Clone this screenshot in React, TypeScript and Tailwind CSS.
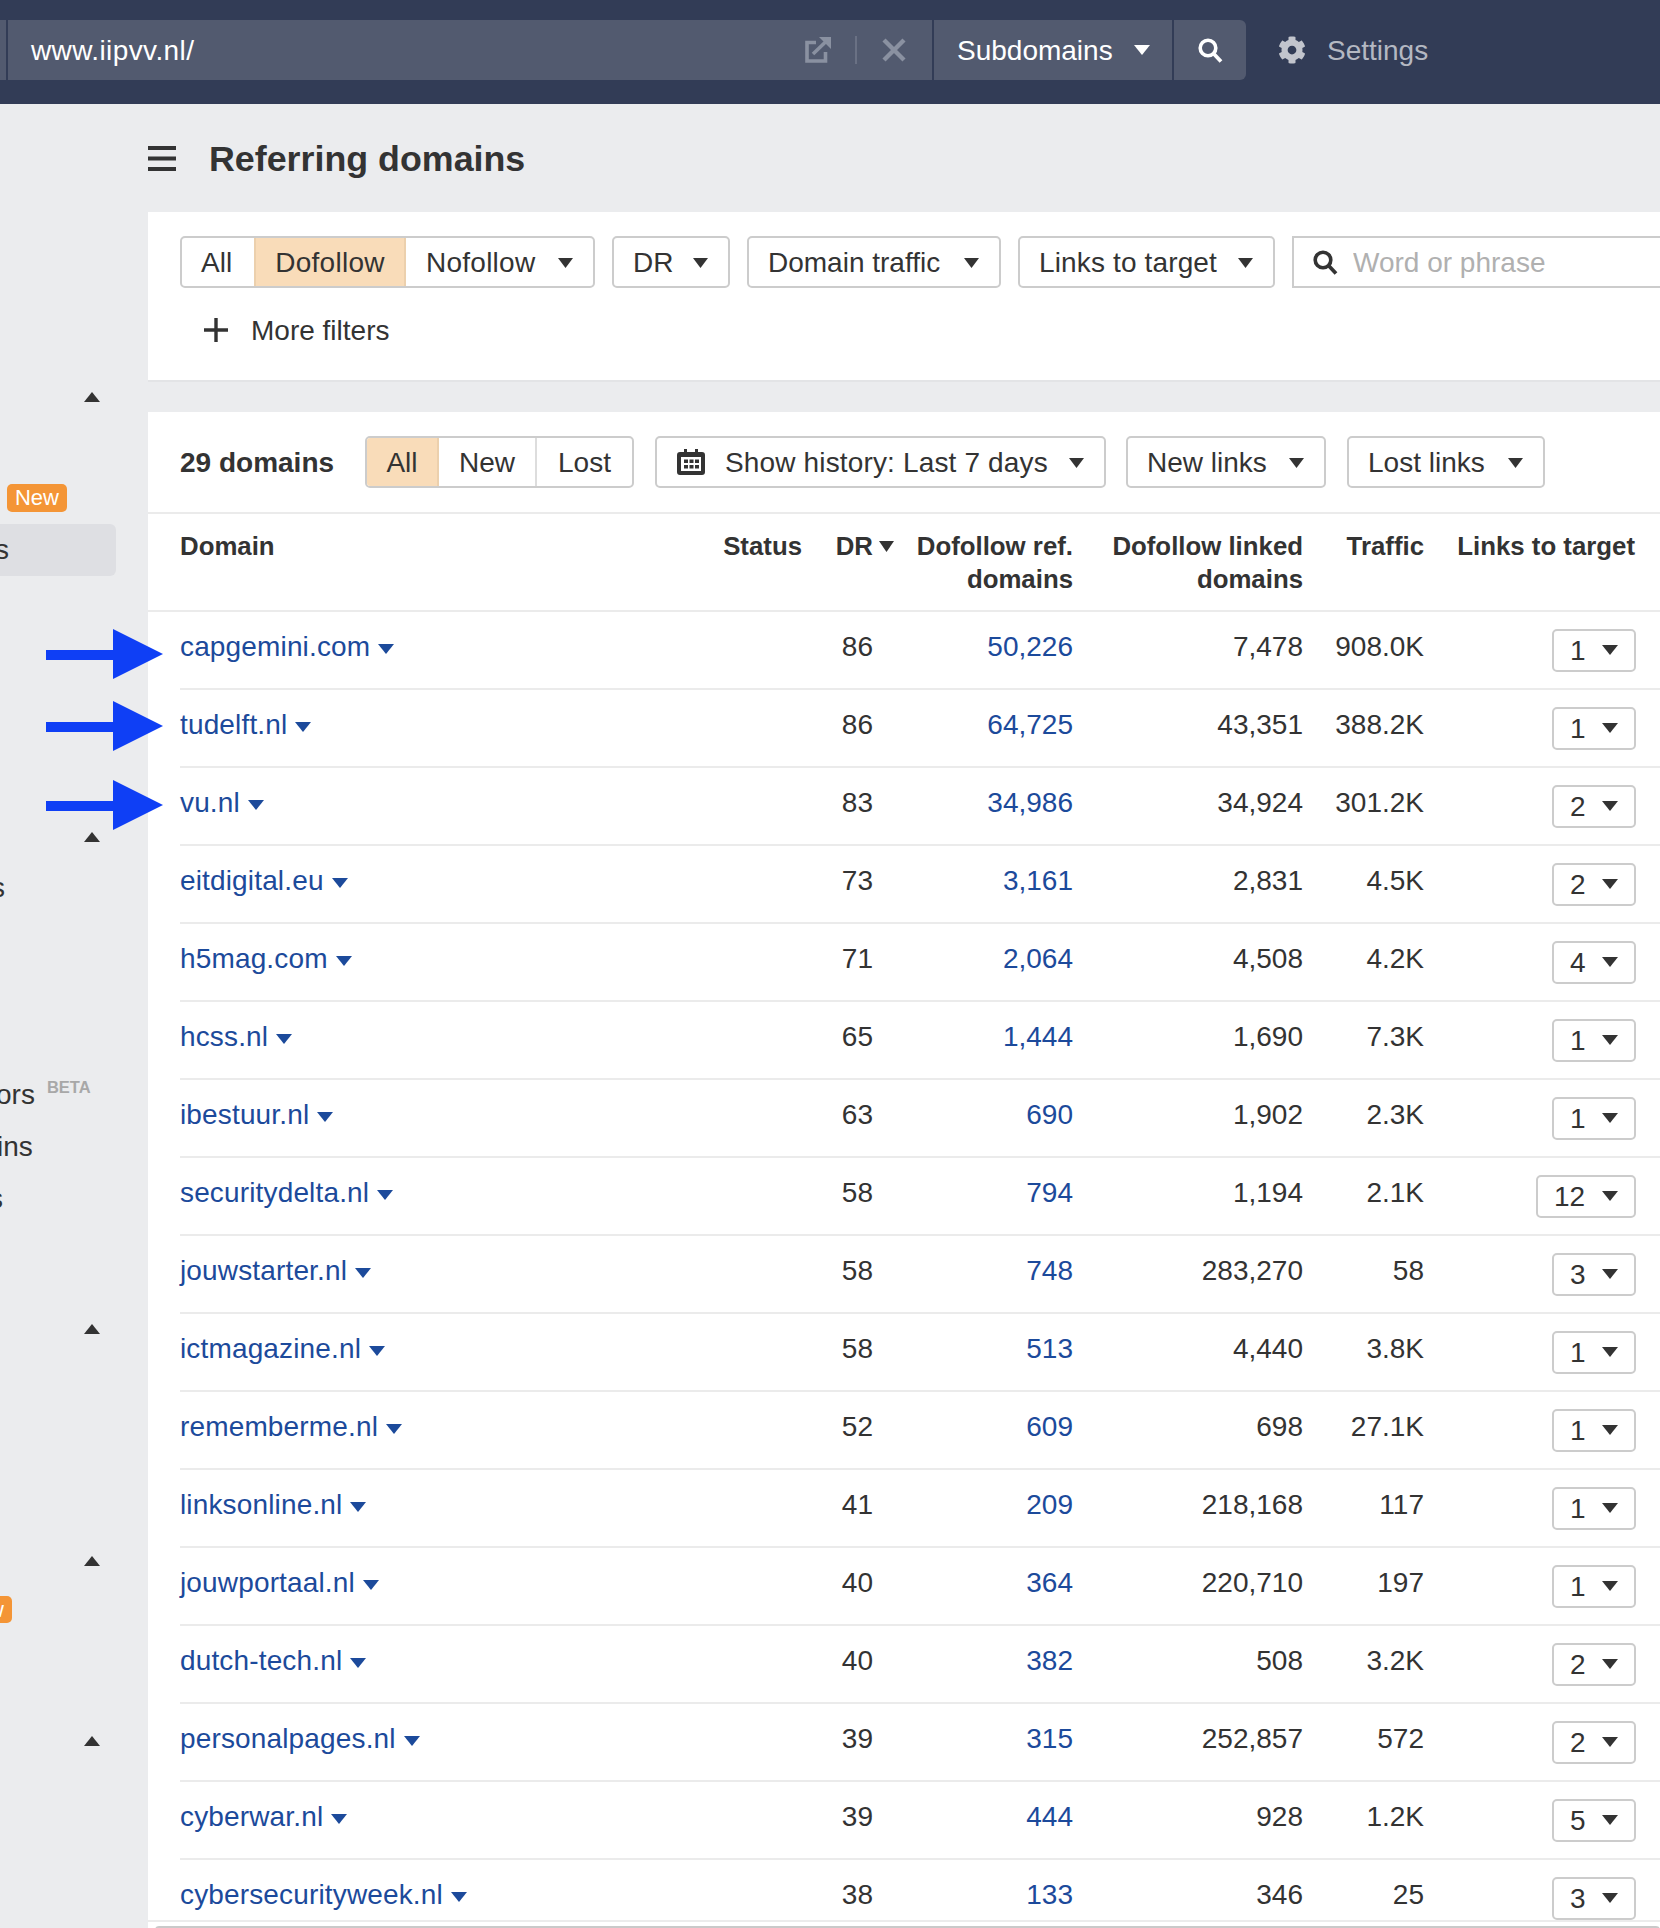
import { FaCog } from "react-icons/fa";

const rows = [
  { domain: "capgemini.com", dr: 86, ref: "50,226", linked: "7,478", traffic: "908.0K", links: 1 },
  { domain: "tudelft.nl", dr: 86, ref: "64,725", linked: "43,351", traffic: "388.2K", links: 1 },
  { domain: "vu.nl", dr: 83, ref: "34,986", linked: "34,924", traffic: "301.2K", links: 2 },
  { domain: "eitdigital.eu", dr: 73, ref: "3,161", linked: "2,831", traffic: "4.5K", links: 2 },
  { domain: "h5mag.com", dr: 71, ref: "2,064", linked: "4,508", traffic: "4.2K", links: 4 },
  { domain: "hcss.nl", dr: 65, ref: "1,444", linked: "1,690", traffic: "7.3K", links: 1 },
  { domain: "ibestuur.nl", dr: 63, ref: "690", linked: "1,902", traffic: "2.3K", links: 1 },
  { domain: "securitydelta.nl", dr: 58, ref: "794", linked: "1,194", traffic: "2.1K", links: 12 },
  { domain: "jouwstarter.nl", dr: 58, ref: "748", linked: "283,270", traffic: "58", links: 3 },
  { domain: "ictmagazine.nl", dr: 58, ref: "513", linked: "4,440", traffic: "3.8K", links: 1 },
  { domain: "rememberme.nl", dr: 52, ref: "609", linked: "698", traffic: "27.1K", links: 1 },
  { domain: "linksonline.nl", dr: 41, ref: "209", linked: "218,168", traffic: "117", links: 1 },
  { domain: "jouwportaal.nl", dr: 40, ref: "364", linked: "220,710", traffic: "197", links: 1 },
  { domain: "dutch-tech.nl", dr: 40, ref: "382", linked: "508", traffic: "3.2K", links: 2 },
  { domain: "personalpages.nl", dr: 39, ref: "315", linked: "252,857", traffic: "572", links: 2 },
  { domain: "cyberwar.nl", dr: 39, ref: "444", linked: "928", traffic: "1.2K", links: 5 },
  { domain: "cybersecurityweek.nl", dr: 38, ref: "133", linked: "346", traffic: "25", links: 3 },
];

const cols = "grid grid-cols-[543px_79px_92px_179px_230px_121px_211px]";

function Caret({ className = "", fill = "#333333" }: { className?: string; fill?: string }) {
  return (
    <svg viewBox="0 0 16 10" preserveAspectRatio="none" className={`shrink-0 ${className}`}>
      <polygon points="0,0 16,0 8,10" fill={fill} />
    </svg>
  );
}

function CaretUp({ className = "" }: { className?: string }) {
  return (
    <svg viewBox="0 0 16 10" preserveAspectRatio="none" className={`ml-[84px] h-[10px] w-[16px] shrink-0 ${className}`}>
      <polygon points="8,0 16,10 0,10" fill="#333333" />
    </svg>
  );
}

function SearchIcon({ stroke, className = "" }: { stroke: string; className?: string }) {
  return (
    <svg viewBox="0 0 25 25" className={`shrink-0 ${className}`}>
      <circle cx="10" cy="10" r="7.8" fill="none" stroke={stroke} strokeWidth="3.6" />
      <path d="M15.5 15.5L23 23.5" fill="none" stroke={stroke} strokeWidth="3.8" />
    </svg>
  );
}

function DropButton({ label, className = "" }: { label: string; className?: string }) {
  return (
    <button className={`flex h-[52px] shrink-0 items-center justify-between whitespace-nowrap rounded-[5px] border-2 border-[#cccccc] bg-white pl-[19px] pr-[20px] pt-[2px] ${className}`}>
      <span>{label}</span>
      <Caret className="h-[10px] w-[15px]" />
    </button>
  );
}

function Arrow({ className = "" }: { className?: string }) {
  return (
    <svg viewBox="0 0 117 50" className={`absolute left-[46px] h-[50px] w-[117px] ${className}`}>
      <polygon points="0,21 67,21 67,0 117,25 67,50 67,31 0,31" fill="#0f3ff5" />
    </svg>
  );
}

function Sidebar() {
  return (
    <aside className="flex w-[148px] shrink-0 flex-col overflow-hidden pt-[288px] text-[28px] leading-[32px]">
      <CaretUp />
      <span className="ml-[7px] mt-[82px] flex h-[28px] w-[60px] shrink-0 items-center justify-center rounded-[5px] bg-[#f49536] text-[22px] text-white">
        New
      </span>
      <div className="mt-[12px] flex h-[52px] w-[116px] shrink-0 items-center rounded-r-[6px] bg-[#dedfe3]">
        <span className="ml-[-5px]">s</span>
      </div>
      <CaretUp className="mt-[256px]" />
      <span className="ml-[-9px] mt-[30px]">s</span>
      <div className="mt-[175px] flex">
        <span className="ml-[-4px]">ors</span>
        <span className="ml-[12px] mt-[-2px] text-[16.5px] font-bold leading-[20px] text-[#a8a8a8]">BETA</span>
      </div>
      <span className="ml-[-3px] mt-[20px]">ins</span>
      <span className="ml-[-11px] mt-[20px]">s</span>
      <CaretUp className="mt-[109px]" />
      <CaretUp className="mt-[222px]" />
      <span className="ml-[-48px] mt-[30px] flex h-[27px] w-[60px] shrink-0 items-center justify-center rounded-[5px] bg-[#f49536] text-[22px] text-white">
        New
      </span>
      <CaretUp className="mt-[113px]" />
    </aside>
  );
}

function TopBar() {
  return (
    <header className="flex h-[104px] items-center bg-[#323c56] pb-[4px] text-[28px] leading-[32px]">
      <div className="h-[60px] w-[6px] bg-[#525a6f]" />
      <div className="ml-[2px] flex h-[60px] w-[924px] items-center bg-[#525a6f] pl-[23px] text-white">
        <span className="pt-[2px] tracking-[0.4px]">www.iipvv.nl/</span>
        <svg viewBox="0 0 26 26" className="ml-auto h-[26px] w-[26px]">
          <path d="M11 5.5H2V24H20.5V15" fill="none" stroke="#8a91a1" strokeWidth="3.6" />
          <path d="M8 17L21 4.5" fill="none" stroke="#8a91a1" strokeWidth="3.6" />
          <polygon points="14,0 26,0 26,12" fill="#8a91a1" />
        </svg>
        <div className="ml-[24px] h-[28px] w-[2px] bg-[#6a7184]" />
        <svg viewBox="0 0 24 24" className="ml-[25px] mr-[26px] h-[24px] w-[24px]">
          <path d="M2 2L22 22M22 2L2 22" fill="none" stroke="#8a91a1" strokeWidth="4.4" />
        </svg>
      </div>
      <div className="ml-[2px] flex h-[60px] w-[238px] items-center gap-[21px] bg-[#525a6f] pl-[23px] text-white">
        <span className="pt-[2px]">Subdomains</span>
        <Caret className="h-[10px] w-[16px]" fill="#ffffff" />
      </div>
      <div className="ml-[2px] flex h-[60px] w-[72px] items-center justify-center rounded-r-[6px] bg-[#525a6f]">
        <SearchIcon stroke="#ffffff" className="h-[25px] w-[25px]" />
      </div>
      <FaCog className="ml-[32px] h-[28px] w-[28px] text-[#c2c5cd]" />
      <span className="ml-[21px] pt-[2px] text-[#b4b8c2]">Settings</span>
    </header>
  );
}

function FilterPanel() {
  return (
    <section className="h-[170px] border-b-2 border-[#e3e4e6] bg-white pl-[32px] pt-[24px]">
      <div className="flex gap-[17px]">
        <div className="flex h-[52px] w-[415px] shrink-0 overflow-hidden rounded-[5px] border-2 border-[#cccccc] pt-0">
          <span className="flex w-[72px] shrink-0 items-center pl-[19px] pt-[2px]">All</span>
          <span className="flex w-[152px] shrink-0 items-center justify-center border-x-2 border-[#ecd0ad] bg-[#f9dcb9] pt-[2px] tracking-[0.25px]">
            Dofollow
          </span>
          <button className="flex flex-1 items-center justify-between whitespace-nowrap pl-[20px] pr-[20px] pt-[2px] tracking-[0.25px]">
            <span>Nofollow</span>
            <Caret className="h-[10px] w-[15px]" />
          </button>
        </div>
        <DropButton label="DR" className="w-[118px]" />
        <DropButton label="Domain traffic" className="w-[254px]" />
        <DropButton label="Links to target" className="w-[257px] tracking-[0.14px]" />
        <div className="flex h-[52px] w-[420px] shrink-0 items-center border-2 border-[#cccccc] pl-[19px]">
          <SearchIcon stroke="#333333" className="h-[25px] w-[25px]" />
          <input
            placeholder="Word or phrase"
            className="ml-[15px] min-w-0 flex-1 pt-[2px] outline-none placeholder:text-[#b0b0b0]"
          />
        </div>
      </div>
      <div className="ml-[24px] mt-[24px] flex h-[36px] items-center gap-[23px]">
        <svg viewBox="0 0 24 24" className="h-[24px] w-[24px]">
          <path d="M12 0V24M0 12H24" fill="none" stroke="#333333" strokeWidth="3.4" />
        </svg>
        <span className="pt-[2px]">More filters</span>
      </div>
    </section>
  );
}

function TableToolbar() {
  return (
    <div className="flex h-[102px] items-center border-b-2 border-[#ebebeb] pl-[32px]">
      <span className="w-[185px] pt-[2px] font-bold">29 domains</span>
      <div className="flex h-[52px] w-[269px] shrink-0 overflow-hidden rounded-[5px] border-2 border-[#cccccc]">
        <span className="flex w-[72px] items-center justify-center border-r-2 border-[#ecd0ad] bg-[#f9dcb9] pt-[2px]">All</span>
        <span className="flex w-[98px] items-center justify-center border-r-2 border-[#dddddd] pt-[2px]">New</span>
        <span className="flex flex-1 items-center justify-center pt-[2px]">Lost</span>
      </div>
      <button className="ml-[21px] flex h-[52px] w-[451px] shrink-0 items-center rounded-[5px] border-2 border-[#cccccc] bg-white pl-[20px] pr-[20px]">
        <svg viewBox="0 0 28 26" className="h-[26px] w-[28px] shrink-0">
          <path d="M3 3H7V0H10V3H18V0H21V3H25A3 3 0 0 1 28 6V23A3 3 0 0 1 25 26H3A3 3 0 0 1 0 23V6A3 3 0 0 1 3 3Z" fill="#333333" />
          <rect x="4" y="8" width="20" height="14" fill="#ffffff" />
          <path d="M7 10.5H11V14H7ZM12.5 10.5H16.5V14H12.5ZM18 10.5H22V14H18ZM7 16H11V19.5H7ZM12.5 16H16.5V19.5H12.5ZM18 16H22V19.5H18Z" fill="#333333" />
        </svg>
        <span className="ml-[20px] whitespace-nowrap pt-[2px] tracking-[0.15px]">Show history: Last 7 days</span>
        <Caret className="ml-auto mt-[2px] h-[10px] w-[15px]" />
      </button>
      <DropButton label="New links" className="ml-[20px] w-[200px]" />
      <DropButton label="Lost links" className="ml-[21px] w-[198px]" />
    </div>
  );
}

function TableHead() {
  return (
    <div className={`${cols} h-[98px] border-b-2 border-[#ebebeb] pl-[32px] pt-[16px] text-[25.8px] font-bold leading-[33px]`}>
      <div>Domain</div>
      <div className="text-right">Status</div>
      <div className="flex items-center justify-end gap-[6px] self-start">
        DR
        <Caret className="h-[11px] w-[15px]" />
      </div>
      <div className="text-right">
        Dofollow ref.
        <br />
        domains
      </div>
      <div className="text-right">
        Dofollow linked
        <br />
        domains
      </div>
      <div className="text-right">Traffic</div>
      <div className="text-right">Links to target</div>
    </div>
  );
}

function LinksSelect({ value }: { value: number }) {
  return (
    <div className="mr-[-1px] flex justify-end">
      <div
        className={`flex h-[43px] items-center justify-between rounded-[5px] border-2 border-[#cccccc] pl-[16px] pr-[16px] ${
          value > 9 ? "w-[100px]" : "w-[84px]"
        }`}
      >
        <span>{value}</span>
        <Caret className="mt-[-1px] h-[10px] w-[16px]" />
      </div>
    </div>
  );
}

function Row({ row, last }: { row: (typeof rows)[number]; last: boolean }) {
  return (
    <div className={`${cols} ml-[32px] ${last ? "h-[60px] overflow-hidden" : "h-[78px] border-b-2 border-[#ebebeb]"}`}>
      <div className="pt-[19px]">
        <a className="inline-flex items-center gap-[8px] tracking-[0.15px] text-[#1c4a9b]">
          {row.domain}
          <Caret className="mt-[4px] h-[10px] w-[16px]" fill="#1c4a9b" />
        </a>
      </div>
      <div />
      <div className="pr-[21px] pt-[19px] text-right">{row.dr}</div>
      <div className="pt-[19px] text-right text-[#1c4a9b]">{row.ref}</div>
      <div className="pt-[19px] text-right">{row.linked}</div>
      <div className="pt-[19px] text-right">{row.traffic}</div>
      <div className="pt-[17px]">
        <LinksSelect value={row.links} />
      </div>
    </div>
  );
}

export default function App() {
  return (
    <div className="relative h-[1928px] w-[1660px] overflow-hidden bg-[#ebecee] font-['Liberation_Sans',Arial,sans-serif] text-[28px] leading-[32px] text-[#333333]">
      <TopBar />
      <div className="flex">
        <Sidebar />
        <main className="min-w-0 flex-1 overflow-hidden">
          <div className="flex h-[108px] items-center gap-[33px]">
            <svg viewBox="0 0 28 25" className="h-[25px] w-[28px]">
              <path d="M0 0H28V4H0ZM0 10.5H28V14.5H0ZM0 21H28V25H0Z" fill="#333333" />
            </svg>
            <h1 className="pt-[2px] text-[35.8px] font-bold leading-[44px]">Referring domains</h1>
          </div>
          <FilterPanel />
          <section className="mt-[30px] bg-white">
            <TableToolbar />
            <TableHead />
            {rows.map((row, i) => (
              <Row key={row.domain} row={row} last={i === rows.length - 1} />
            ))}
            <div className="h-[2px] bg-[#ebebeb]" />
            <div className="ml-[7px] mt-[4px] h-[8px] rounded-full bg-[#c9c9c9]" />
          </section>
        </main>
      </div>
      <Arrow className="top-[629px]" />
      <Arrow className="top-[701px]" />
      <Arrow className="top-[780px]" />
    </div>
  );
}
